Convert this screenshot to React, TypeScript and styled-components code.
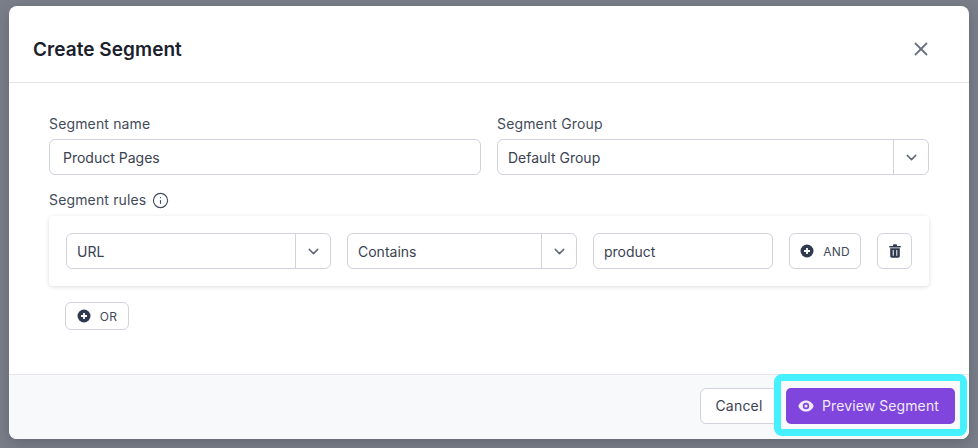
import styled, { createGlobalStyle } from 'styled-components';
import { ChevronDown, X, Info } from 'lucide-react';

const GlobalStyle = createGlobalStyle`
  html, body {
    margin: 0;
    padding: 0;
    height: 100%;
    overflow: hidden;
    background: #7b7f8a;
    font-family: Inter, "Liberation Sans", sans-serif;
  }
`;

const Backdrop = styled.div`
  width: 978px;
  height: 448px;
  box-sizing: border-box;
  padding: 6px 9px 9px;
  background: #7a7e89;
`;

const Modal = styled.div`
  position: relative;
  width: 960px;
  height: 433px;
  display: flex;
  flex-direction: column;
  background: #fff;
  border-radius: 8px;
  box-shadow: 0 4px 14px rgba(30, 34, 45, 0.25);
`;

const Header = styled.div`
  height: 77px;
  box-sizing: border-box;
  padding: 10px 37px 0 24px;
  display: flex;
  align-items: center;
  justify-content: space-between;
  border-bottom: 1px solid #e4e6ea;
`;

const Title = styled.h1`
  margin: 0;
  font-size: 19px;
  font-weight: 600;
  letter-spacing: 0.05px;
  color: #1a202c;
`;

const Body = styled.div`
  flex: 1;
  padding: 32px 40px 0;
`;

const FieldRow = styled.div`
  display: grid;
  grid-template-columns: 432px 432px;
  column-gap: 16px;
`;

const Field = styled.div`
  display: flex;
  flex-direction: column;
`;

const Label = styled.label`
  display: flex;
  align-items: center;
  gap: 6px;
  height: 18px;
  margin-bottom: 6px;
  font-size: 14px;
  line-height: 18px;
  letter-spacing: 0.15px;
  color: #434b5a;
`;

const TextBox = styled.div<{ $width?: number; $inset?: number }>`
  width: ${(p) => (p.$width ? `${p.$width}px` : 'auto')};
  height: 36px;
  box-sizing: border-box;
  padding: 0 ${(p) => p.$inset ?? 10}px;
  display: flex;
  align-items: center;
  background: #fff;
  border: 1px solid #d1d3dc;
  border-radius: 6px;
  font-size: 14px;
  color: #3a4252;
`;

const Select = styled.div<{ $width?: number }>`
  width: ${(p) => (p.$width ? `${p.$width}px` : 'auto')};
  height: 36px;
  box-sizing: border-box;
  display: flex;
  align-items: stretch;
  background: #fff;
  border: 1px solid #d1d3dc;
  border-radius: 6px;
  font-size: 14px;
  color: #3a4252;
`;

const SelectValue = styled.div`
  flex: 1;
  padding-left: 10px;
  display: flex;
  align-items: center;
`;

const SelectCaret = styled.div`
  width: 35px;
  box-sizing: border-box;
  display: flex;
  align-items: center;
  justify-content: center;
  border-left: 1px solid #d1d3dc;
  color: #5f6675;
`;

const RulesSection = styled.div`
  margin-top: 16px;
`;

const RuleCard = styled.div`
  margin-top: 7px;
  height: 70px;
  box-sizing: border-box;
  padding: 0 17px;
  display: flex;
  align-items: center;
  background: #fff;
  border-radius: 4px;
  box-shadow: 0 1px 4px rgba(40, 45, 60, 0.16);
`;

const OutlineButton = styled.button<{ $width: number; $height?: number }>`
  width: ${(p) => p.$width}px;
  height: ${(p) => p.$height ?? 36}px;
  padding: 0;
  display: flex;
  align-items: center;
  justify-content: center;
  gap: 9px;
  background: #fff;
  border: 1px solid #d1d3dc;
  border-radius: 6px;
  font-family: inherit;
  font-size: 12px;
  font-weight: 400;
  letter-spacing: 0.2px;
  color: #434b5a;
`;

const AndButton = styled(OutlineButton)`
  margin-left: 16px;
`;

const TrashButton = styled(OutlineButton)`
  margin-left: 16px;
`;

const SpacedSelect = styled(Select)`
  margin-left: 16px;
`;

const SpacedText = styled(TextBox)`
  margin-left: 16px;
`;

const OrRow = styled.div`
  margin-top: 16px;
  padding-left: 16px;
`;

const Footer = styled.div`
  height: 65px;
  box-sizing: border-box;
  padding: 0 14px 3px 0;
  display: flex;
  align-items: center;
  justify-content: flex-end;
  gap: 8px;
  background: #f8f9fa;
  border-top: 1px solid #e4e6ea;
  border-radius: 0 0 8px 8px;
`;

const CancelButton = styled.button`
  width: 78px;
  height: 36px;
  padding: 0;
  background: #fff;
  border: 1px solid #d1d3dc;
  border-radius: 6px;
  font-family: inherit;
  font-size: 14px;
  font-weight: 400;
  letter-spacing: 0.2px;
  color: #3a4252;
`;

const PrimaryButton = styled.button`
  width: 169px;
  height: 36px;
  padding: 0 0 0 12px;
  display: flex;
  align-items: center;
  gap: 8px;
  background: #7f45dc;
  border: none;
  border-radius: 5px;
  font-family: inherit;
  font-size: 14px;
  font-weight: 400;
  letter-spacing: 0.1px;
  color: #f1eafc;
`;

const Highlight = styled.div`
  position: absolute;
  left: 765px;
  top: 368px;
  width: 193px;
  height: 62px;
  box-sizing: border-box;
  border: 7px solid #45f0ff;
  border-radius: 8px;
  pointer-events: none;
`;

function PlusCircle() {
  return (
    <svg width="14" height="14" viewBox="0 0 14 14">
      <circle cx="7" cy="7" r="6.5" fill="#2f3a4f" />
      <path d="M7 4v6M4 7h6" stroke="#fff" strokeWidth="1.8" />
    </svg>
  );
}

function Trash() {
  return (
    <svg width="12" height="14" viewBox="0 0 12 14">
      <path
        d="M4 1.2C4 .6 4.4.3 5 .3h2c.6 0 1 .3 1 .9V2h3.2c.4 0 .7.3.7.7s-.3.7-.7.7H.8c-.4 0-.7-.3-.7-.7s.3-.7.7-.7H4z"
        fill="#2f3a4f"
      />
      <path
        d="M1.2 4.2h9.6V12c0 1-.7 1.7-1.7 1.7H2.9c-1 0-1.7-.7-1.7-1.7V4.2zM3.7 6v5.8h1V6h-1zm3.6 0v5.8h1V6h-1z"
        fill="#2f3a4f"
        fillRule="evenodd"
      />
    </svg>
  );
}

function SolidEye() {
  return (
    <svg width="16" height="16" viewBox="0 0 20 20" fill="#f1eafc">
      <path d="M10 12a2 2 0 100-4 2 2 0 000 4z" />
      <path
        fillRule="evenodd"
        d="M.458 10C1.732 5.943 5.522 3 10 3s8.268 2.943 9.542 7c-1.274 4.057-5.064 7-9.542 7S1.732 14.057.458 10zM14 10a4 4 0 11-8 0 4 4 0 018 0z"
      />
    </svg>
  );
}

function SelectParts({ value }: { value: string }) {
  return (
    <>
      <SelectValue>{value}</SelectValue>
      <SelectCaret>
        <ChevronDown size={17} strokeWidth={2} />
      </SelectCaret>
    </>
  );
}

export default function App() {
  return (
    <>
      <GlobalStyle />
      <Backdrop>
        <Modal>
          <Header>
            <Title>Create Segment</Title>
            <X size={22} color="#6b7280" strokeWidth={2} />
          </Header>
          <Body>
            <FieldRow>
              <Field>
                <Label>Segment name</Label>
                <TextBox $inset={13}>Product Pages</TextBox>
              </Field>
              <Field>
                <Label>Segment Group</Label>
                <Select>
                  <SelectParts value="Default Group" />
                </Select>
              </Field>
            </FieldRow>
            <RulesSection>
              <Label>
                Segment rules
                <Info size={17} color="#434b5a" strokeWidth={1.6} />
              </Label>
              <RuleCard>
                <Select $width={265}>
                  <SelectParts value="URL" />
                </Select>
                <SpacedSelect $width={230}>
                  <SelectParts value="Contains" />
                </SpacedSelect>
                <SpacedText $width={180}>product</SpacedText>
                <AndButton $width={72}>
                  <PlusCircle />
                  AND
                </AndButton>
                <TrashButton $width={35}>
                  <Trash />
                </TrashButton>
              </RuleCard>
              <OrRow>
                <OutlineButton $width={64} $height={28}>
                  <PlusCircle />
                  OR
                </OutlineButton>
              </OrRow>
            </RulesSection>
          </Body>
          <Footer>
            <CancelButton>Cancel</CancelButton>
            <PrimaryButton>
              <SolidEye />
              Preview Segment
            </PrimaryButton>
          </Footer>
          <Highlight />
        </Modal>
      </Backdrop>
    </>
  );
}
